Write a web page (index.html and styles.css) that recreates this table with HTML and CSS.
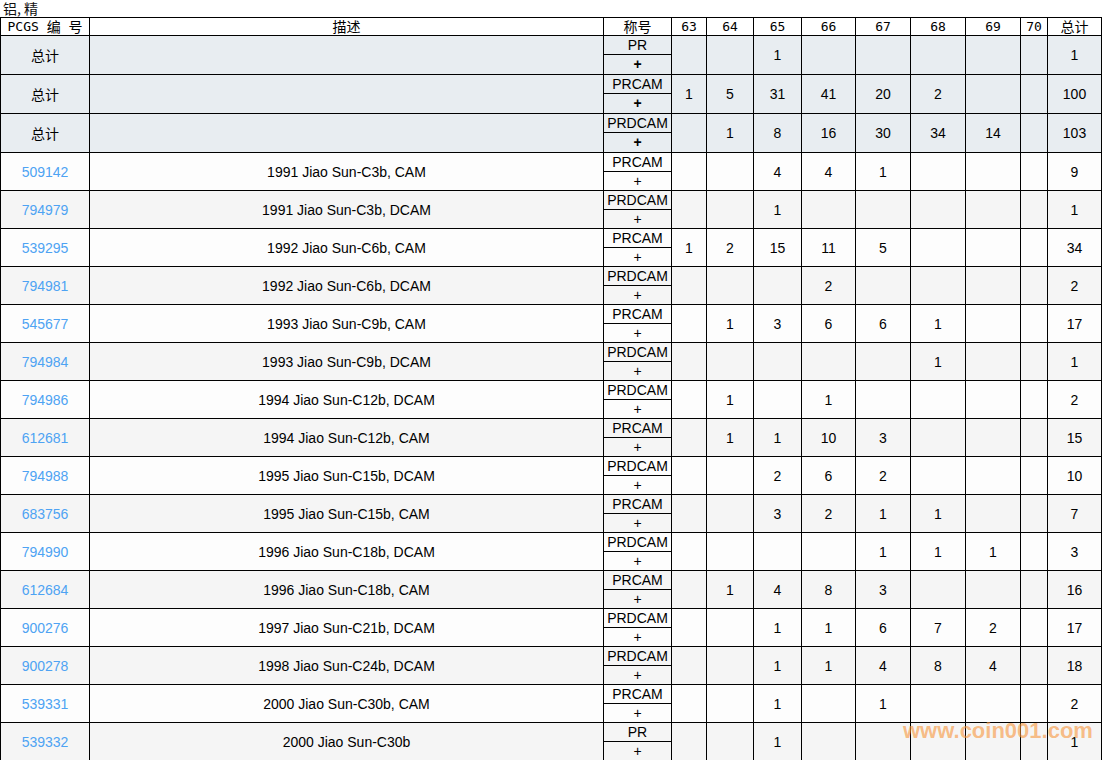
FILE: index.html
```html
<!DOCTYPE html>
<html lang="zh">
<head>
<meta charset="utf-8">
<title>铝,精</title>
<link rel="stylesheet" href="styles.css">
</head>
<body>
<div class="title">铝,&nbsp;精</div>
<table class="pop">
<colgroup>
<col class="c-id"><col class="c-desc"><col class="c-des"><col class="c63"><col class="c64"><col class="c65"><col class="c66"><col class="c67"><col class="c68"><col class="c69"><col class="c70"><col class="c-tot">
</colgroup>
<thead>
<tr class="head"><th>PCGS <span class="hz">编</span> <span class="hz">号</span></th><th class="hz">描述</th><th class="hz">称号</th><th>63</th><th>64</th><th>65</th><th>66</th><th>67</th><th>68</th><th>69</th><th>70</th><th class="hz">总计</th></tr>
</thead>
<tbody>
<tr class="sum"><td class="cjk">总计</td><td></td><td class="des"><div class="d-top">PR</div><div class="d-bot">+</div></td><td></td><td></td><td>1</td><td></td><td></td><td></td><td></td><td></td><td>1</td></tr>
<tr class="sum"><td class="cjk">总计</td><td></td><td class="des"><div class="d-top">PRCAM</div><div class="d-bot">+</div></td><td>1</td><td>5</td><td>31</td><td>41</td><td>20</td><td>2</td><td></td><td></td><td>100</td></tr>
<tr class="sum"><td class="cjk">总计</td><td></td><td class="des"><div class="d-top">PRDCAM</div><div class="d-bot">+</div></td><td></td><td>1</td><td>8</td><td>16</td><td>30</td><td>34</td><td>14</td><td></td><td>103</td></tr>

<tr class="row w"><td><a class="pid" href="#">509142</a></td><td>1991 Jiao Sun-C3b, CAM</td><td class="des"><div class="d-top">PRCAM</div><div class="d-bot">+</div></td><td></td><td></td><td>4</td><td>4</td><td>1</td><td></td><td></td><td></td><td>9</td></tr>
<tr class="row g"><td><a class="pid" href="#">794979</a></td><td>1991 Jiao Sun-C3b, DCAM</td><td class="des"><div class="d-top">PRDCAM</div><div class="d-bot">+</div></td><td></td><td></td><td>1</td><td></td><td></td><td></td><td></td><td></td><td>1</td></tr>
<tr class="row w"><td><a class="pid" href="#">539295</a></td><td>1992 Jiao Sun-C6b, CAM</td><td class="des"><div class="d-top">PRCAM</div><div class="d-bot">+</div></td><td>1</td><td>2</td><td>15</td><td>11</td><td>5</td><td></td><td></td><td></td><td>34</td></tr>
<tr class="row g"><td><a class="pid" href="#">794981</a></td><td>1992 Jiao Sun-C6b, DCAM</td><td class="des"><div class="d-top">PRDCAM</div><div class="d-bot">+</div></td><td></td><td></td><td></td><td>2</td><td></td><td></td><td></td><td></td><td>2</td></tr>
<tr class="row w"><td><a class="pid" href="#">545677</a></td><td>1993 Jiao Sun-C9b, CAM</td><td class="des"><div class="d-top">PRCAM</div><div class="d-bot">+</div></td><td></td><td>1</td><td>3</td><td>6</td><td>6</td><td>1</td><td></td><td></td><td>17</td></tr>
<tr class="row g"><td><a class="pid" href="#">794984</a></td><td>1993 Jiao Sun-C9b, DCAM</td><td class="des"><div class="d-top">PRDCAM</div><div class="d-bot">+</div></td><td></td><td></td><td></td><td></td><td></td><td>1</td><td></td><td></td><td>1</td></tr>
<tr class="row w"><td><a class="pid" href="#">794986</a></td><td>1994 Jiao Sun-C12b, DCAM</td><td class="des"><div class="d-top">PRDCAM</div><div class="d-bot">+</div></td><td></td><td>1</td><td></td><td>1</td><td></td><td></td><td></td><td></td><td>2</td></tr>
<tr class="row g"><td><a class="pid" href="#">612681</a></td><td>1994 Jiao Sun-C12b, CAM</td><td class="des"><div class="d-top">PRCAM</div><div class="d-bot">+</div></td><td></td><td>1</td><td>1</td><td>10</td><td>3</td><td></td><td></td><td></td><td>15</td></tr>
<tr class="row w"><td><a class="pid" href="#">794988</a></td><td>1995 Jiao Sun-C15b, DCAM</td><td class="des"><div class="d-top">PRDCAM</div><div class="d-bot">+</div></td><td></td><td></td><td>2</td><td>6</td><td>2</td><td></td><td></td><td></td><td>10</td></tr>
<tr class="row g"><td><a class="pid" href="#">683756</a></td><td>1995 Jiao Sun-C15b, CAM</td><td class="des"><div class="d-top">PRCAM</div><div class="d-bot">+</div></td><td></td><td></td><td>3</td><td>2</td><td>1</td><td>1</td><td></td><td></td><td>7</td></tr>
<tr class="row w"><td><a class="pid" href="#">794990</a></td><td>1996 Jiao Sun-C18b, DCAM</td><td class="des"><div class="d-top">PRDCAM</div><div class="d-bot">+</div></td><td></td><td></td><td></td><td></td><td>1</td><td>1</td><td>1</td><td></td><td>3</td></tr>
<tr class="row g"><td><a class="pid" href="#">612684</a></td><td>1996 Jiao Sun-C18b, CAM</td><td class="des"><div class="d-top">PRCAM</div><div class="d-bot">+</div></td><td></td><td>1</td><td>4</td><td>8</td><td>3</td><td></td><td></td><td></td><td>16</td></tr>
<tr class="row w"><td><a class="pid" href="#">900276</a></td><td>1997 Jiao Sun-C21b, DCAM</td><td class="des"><div class="d-top">PRDCAM</div><div class="d-bot">+</div></td><td></td><td></td><td>1</td><td>1</td><td>6</td><td>7</td><td>2</td><td></td><td>17</td></tr>
<tr class="row g"><td><a class="pid" href="#">900278</a></td><td>1998 Jiao Sun-C24b, DCAM</td><td class="des"><div class="d-top">PRDCAM</div><div class="d-bot">+</div></td><td></td><td></td><td>1</td><td>1</td><td>4</td><td>8</td><td>4</td><td></td><td>18</td></tr>
<tr class="row w"><td><a class="pid" href="#">539331</a></td><td>2000 Jiao Sun-C30b, CAM</td><td class="des"><div class="d-top">PRCAM</div><div class="d-bot">+</div></td><td></td><td></td><td>1</td><td></td><td>1</td><td></td><td></td><td></td><td>2</td></tr>
<tr class="row g"><td><a class="pid" href="#">539332</a></td><td>2000 Jiao Sun-C30b</td><td class="des"><div class="d-top">PR</div><div class="d-bot">+</div></td><td></td><td></td><td>1</td><td></td><td></td><td></td><td></td><td></td><td>1</td></tr>
</tbody>
</table>
<div class="watermark">www.coin001.com</div>
</body>
</html>
```
FILE: styles.css
```css
html, body {
  margin: 0;
  padding: 0;
  background: #ffffff;
}
body {
  position: relative;
  font-family: "Liberation Sans", Arial, "Noto Sans CJK SC", sans-serif;
  font-size: 14px;
  color: #000;
}
.title {
  height: 17px;
  line-height: 16px;
  padding-left: 3px;
  font-family: "Noto Sans CJK SC", sans-serif;
  font-size: 14px;
  color: #111;
}
.pop {
  border-collapse: collapse;
  table-layout: fixed;
  width: 1102px;
}
.c-id { width: 89px; }
.c-desc { width: 514px; }
.c-des { width: 68px; }
.c63 { width: 35px; }
.c64 { width: 47px; }
.c65 { width: 48px; }
.c66 { width: 54px; }
.c67 { width: 55px; }
.c68 { width: 55px; }
.c69 { width: 55px; }
.c70 { width: 27px; }
.c-tot { width: 54px; }
.pop th, .pop td {
  border: 1px solid #000;
  padding: 0;
  text-align: center;
  vertical-align: middle;
  overflow: hidden;
  white-space: nowrap;
}
.head th {
  height: 17px;
  line-height: 17px;
  font-weight: normal;
  font-family: "DejaVu Sans Mono", "Noto Sans CJK SC", monospace;
  font-size: 13px;
  color: #000;
}
.head .hz {
  font-family: "Noto Sans CJK SC", sans-serif;
  font-size: 14px;
  line-height: 17px;
}
.head span.hz {
  display: inline-block;
  height: 17px;
  vertical-align: top;
}
.sum { background: #e8edf1; }
.row.w { background: #fdfdfd; }
.row.g { background: #f5f5f5; }
.cjk {
  font-family: "Noto Sans CJK SC", sans-serif;
  font-size: 14px;
}
.des .d-top {
  height: 18px;
  line-height: 18px;
  border-bottom: 1px solid #000;
}
.sum .des .d-bot {
  height: 19px;
  line-height: 19px;
  font-weight: bold;
}
.row .des .d-bot {
  height: 18px;
  line-height: 18px;
}
.row td { height: 37px; }
.pid {
  color: #4ea3f3;
  text-decoration: none;
}
.watermark {
  position: absolute;
  left: 903px;
  top: 719px;
  line-height: 24px;
  font-family: "Liberation Sans", Arial, sans-serif;
  font-weight: bold;
  font-size: 22px;
  color: rgba(248, 150, 60, 0.62);
  pointer-events: none;
}
```
